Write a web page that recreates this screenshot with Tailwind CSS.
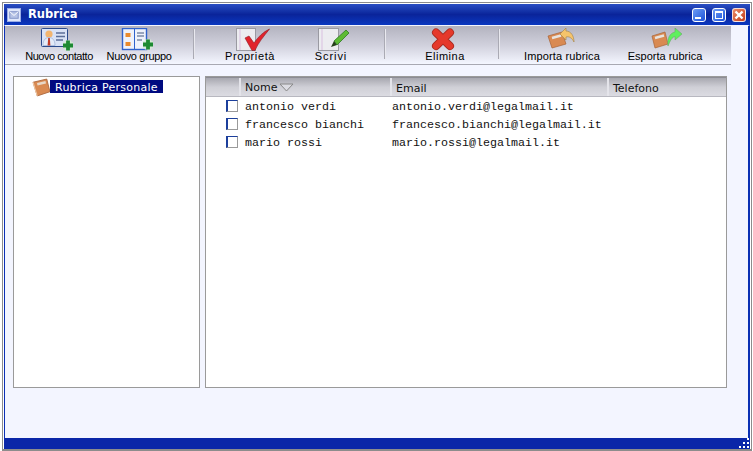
<!DOCTYPE html>
<html><head><meta charset="utf-8"><script src="https://cdn.jsdelivr.net/npm/@tailwindcss/browser@4"></script></head>
<body class="bg-white">
<div class="w-[753px] h-[451px] bg-white pt-[2px] pl-[2px] pr-[1px] overflow-hidden">
<div class="w-[750px] h-[449px] border border-[#8c8c8c] border-b-2 flex flex-col">
<div class="flex-1 flex flex-col border border-white border-b-0 min-h-0">
<!-- title -->
<div class="h-[21px] shrink-0 bg-gradient-to-b from-[#2a4ec4] via-[#0a249a] to-[#0a38c0] flex items-center pl-[3px] pr-[2px]">
  <svg width="14" height="14" viewBox="0 0 15 15" class="shrink-0"><rect x="0.5" y="0.5" width="14" height="14" fill="#dfe6fa" stroke="#9db0e8"/><rect x="3" y="4" width="9" height="7" fill="#b7c3e6" stroke="#7d8fc6"/><path d="M3 4 7.5 8 12 4" fill="none" stroke="#fff"/></svg>
  <span class="ml-[7px] text-white font-bold text-[11.5px] leading-none font-['DejaVu_Sans',sans-serif]">Rubrica</span>
  <div class="ml-auto flex gap-[6px] items-center mr-[2px]">
    <div class="w-[14px] h-[14px] rounded-[3px] border border-white bg-gradient-to-br from-[#6f9cf5] to-[#1c50d8] flex items-end justify-center pb-[2px]"><div class="w-[6px] h-[2px] bg-white -ml-[2px]"></div></div>
    <div class="w-[14px] h-[14px] rounded-[3px] border border-white bg-gradient-to-br from-[#6f9cf5] to-[#1c50d8] flex items-center justify-center"><div class="w-[8px] h-[8px] border border-white border-t-2"></div></div>
    <div class="w-[14px] h-[14px] rounded-[3px] border border-white/80 bg-gradient-to-br from-[#eb8a66] to-[#c23a14] flex items-center justify-center"><svg width="10" height="10" viewBox="0 0 10 10"><path d="M1.5 1.5 8.5 8.5M8.5 1.5 1.5 8.5" stroke="#fff" stroke-width="2.4"/></svg></div>
  </div>
</div>
<!-- body -->
<div class="flex-1 min-h-0 flex flex-col bg-[#f3f5ff] border-l border-r-2 border-[#0a2fb4] border-t-[1.5px] border-t-[#f3f5ff]">
  <div class="w-[726px] h-[39px] shrink-0 flex pl-[14px] border-b border-[#a8a8b2] bg-gradient-to-b from-[#b3b3bf] via-[#d0d0dc] to-[#f4f6ff] font-['Liberation_Sans',sans-serif] text-[11px] text-black">
    <div class="w-[80px] flex flex-col items-center">
      <svg width="40" height="24" viewBox="0 0 40 24" class="shrink-0 mt-[2px]"><rect x="2.5" y="0.5" width="26" height="18" rx="1" fill="#d9e2f5" stroke="#2a4a8c"/><circle cx="10" cy="6" r="3.6" fill="#f2b56f"/><path d="M4 17.5c0-6 3-8 6-8s6 2 6 8z" fill="#e4ebf8" stroke="#8fa4cc" stroke-width=".6"/><path d="M9.2 10h1.6l.6 7.5h-2.8z" fill="#c33a25"/><path d="M17 5h9M17 8.5h9M17 12h7" stroke="#5c6f98" stroke-width="1.6"/><path d="M29 12.5v10M24 17.5h10" stroke="#d5ead5" stroke-width="6.4"/><path d="M29 12.5v10M24 17.5h10" stroke="#1d8a32" stroke-width="3.8"/></svg>
      <span class="-mt-[2px] leading-[13px] tracking-[-.45px] whitespace-nowrap">Nuovo contatto</span>
    </div>
    <div class="w-[80px] flex flex-col items-center">
      <svg width="40" height="24" viewBox="0 0 40 24" class="shrink-0 mt-[2px]"><rect x="3.5" y="0.5" width="24" height="21" fill="#eef2fb" stroke="#2f62cc" stroke-width="1.4"/><path d="M15.5 1v20" stroke="#2f62cc"/><rect x="6.5" y="5" width="5" height="4" fill="#e98a2c"/><rect x="6.5" y="14" width="5" height="4" fill="#e98a2c"/><path d="M18 5h7M18 8h7M18 12h5" stroke="#7c8aa8" stroke-width="1.4"/><path d="M29 11.5v10M24 16.5h10" stroke="#d5ead5" stroke-width="6.4"/><path d="M29 11.5v10M24 16.5h10" stroke="#1d8a32" stroke-width="3.8"/></svg>
      <span class="-mt-[2px] leading-[13px] tracking-[-.35px] whitespace-nowrap">Nuovo gruppo</span>
    </div>
    <div class="w-[2px] h-[30px] mt-[3px] ml-[14px] mr-[15px] bg-[#e9e9ef] border-l border-[#aaaab4]"></div>
    <div class="w-[80px] flex flex-col items-center">
      <svg width="40" height="24" viewBox="0 0 40 24" class="shrink-0 mt-[2px]"><rect x="6.5" y="0.5" width="19" height="22" fill="#ececf0" stroke="#9a9aa2"/><path d="M10 1v21" stroke="#d9c0e0"/><path d="M15 10 19 8 24 15C28 9 33 4 39.5 1 34 8 28 15 25 22.5H22z" fill="#e1232c" stroke="#8e1a22" stroke-width=".6"/></svg>
      <span class="-mt-[2px] leading-[13px] tracking-[.6px] whitespace-nowrap">Proprietà</span>
    </div>
    <div class="w-[80px] flex flex-col items-center ml-[1px]">
      <svg width="40" height="24" viewBox="0 0 40 24" class="shrink-0 mt-[2px]"><rect x="7.5" y="0.5" width="20" height="22" fill="#ececf0" stroke="#9a9aa2"/><path d="M11 1v21" stroke="#d9c0e0"/><path d="M23 13 35 2l3 3-12 12z" fill="#5dbb34" stroke="#2d7a22" stroke-width=".8"/><path d="M20 19l3-6 3 4z" fill="#24401a"/></svg>
      <span class="-mt-[2px] leading-[13px] tracking-[.9px] whitespace-nowrap">Scrivi</span>
    </div>
    <div class="w-[2px] h-[30px] mt-[3px] ml-[13px] mr-[19px] bg-[#e9e9ef] border-l border-[#aaaab4]"></div>
    <div class="w-[80px] flex flex-col items-center">
      <svg width="40" height="24" viewBox="0 0 40 24" class="shrink-0 mt-[2px]"><path d="M11 4.5 25 18M25 4.5 11 18" stroke="#a82a20" stroke-width="8" stroke-linecap="round"/><path d="M11 4.5 25 18M25 4.5 11 18" stroke="#e5392b" stroke-width="6.4" stroke-linecap="round"/></svg>
      <span class="-mt-[2px] leading-[13px] tracking-[.5px] whitespace-nowrap">Elimina</span>
    </div>
    <div class="w-[2px] h-[30px] mt-[3px] ml-[13px] mr-[12px] bg-[#e9e9ef] border-l border-[#aaaab4]"></div>
    <div class="w-[100px] flex flex-col items-center">
      <svg width="40" height="24" viewBox="0 0 40 24" class="shrink-0 mt-[2px]"><path d="M6 8 20 4l4 12-14 4z" fill="#d98a52" stroke="#a8643a" stroke-width=".7"/><path d="M10 10 19 7.5" stroke="#e8e4df" stroke-width="2.4"/><path d="M18 6 24 0V3C29 3 32 8 32 14 30 10 27 8 24 9V12z" fill="#f6c46a" stroke="#a98a50" stroke-width=".7"/></svg>
      <span class="-mt-[2px] leading-[13px] tracking-[.13px] whitespace-nowrap">Importa rubrica</span>
    </div>
    <div class="w-[100px] flex flex-col items-center ml-[3px]">
      <svg width="40" height="24" viewBox="0 0 40 24" class="shrink-0 mt-[2px]"><path d="M7 8 20 4l3 12-13 4z" fill="#d98a52" stroke="#a8643a" stroke-width=".7"/><path d="M10 10 19 7.5" stroke="#e8e4df" stroke-width="2.4"/><path d="M23 18C22 10 25 5 30 4V0L37 6 30 12V8.5C27 9 25 13 23 18z" fill="#5ef05e" stroke="#6aa86a" stroke-width=".6"/></svg>
      <span class="-mt-[2px] leading-[13px] whitespace-nowrap">Esporta rubrica</span>
    </div>
  </div>
  <div class="flex gap-[5px] pl-[8px] pt-[11px]">
    <!-- tree -->
    <div class="w-[187px] h-[312px] shrink-0 border border-[#9a9a9a] bg-white pt-[1px] pl-[18px]">
      <div class="flex items-center h-[19px]">
        <svg width="19" height="19" viewBox="0 0 18 18" class="shrink-0"><path d="M1 4 14 1l3 12-12 4z" fill="#d98a52" stroke="#a8643a" stroke-width=".8" stroke-linejoin="round"/><path d="M5 6 13 4" stroke="#e8d8c8" stroke-width="2.4"/><path d="M1 4l4 13" stroke="#f0c8a4"/></svg>
        <span class="h-[13px] w-[113px] -ml-px -mt-[3px] bg-[#000a80] text-white pl-[5px] font-['DejaVu_Sans',sans-serif] text-[11px] leading-[15px] whitespace-nowrap tracking-[.25px]">Rubrica Personale</span>
      </div>
    </div>
    <!-- list -->
    <div class="w-[522px] h-[312px] shrink-0 border border-[#9a9a9a] bg-white">
      <div class="h-[20px] flex bg-gradient-to-b from-[#a8a8b0] via-[#cfcfd6] to-[#dcdce2] border-b border-[#b8b8c0] border-t border-t-[#8c8c94] font-['DejaVu_Sans',sans-serif] text-[11px] text-[#111] leading-[21px]">
        <div class="w-[33px] shrink-0"></div>
        <div class="w-[151px] shrink-0 border-l-2 border-[#e4e4ea] pl-[4px] flex items-center"><span class="pt-[1px]">Nome</span><svg width="16" height="9" viewBox="0 0 16 9" class="ml-[2px]"><path d="M1 1h13L7.5 8z" fill="#dcdce2" stroke="#888"/></svg></div>
        <div class="w-[217px] shrink-0 border-l-2 border-[#e4e4ea] pl-[4px]">Email</div>
        <div class="flex-1 border-l-2 border-[#e4e4ea] pl-[4px]">Telefono</div>
      </div>
      <div class="font-['Liberation_Mono',monospace] text-[11.67px] leading-[18px] text-[#111]">
        <div class="flex h-[18px] items-center"><div class="w-[20px] shrink-0"></div><div class="w-[12px] h-[12px] border border-l-2 border-[#1c3f9c] border-b-[#9a9a9a] border-r-[#9a9a9a] shrink-0 -mt-[1px]"></div><span class="ml-[7px] w-[147px] shrink-0 pt-[2px]">antonio verdi</span><span class="pt-[2px]">antonio.verdi@legalmail.it</span></div>
        <div class="flex h-[18px] items-center"><div class="w-[20px] shrink-0"></div><div class="w-[12px] h-[12px] border border-l-2 border-[#1c3f9c] border-b-[#9a9a9a] border-r-[#9a9a9a] shrink-0 -mt-[1px]"></div><span class="ml-[7px] w-[147px] shrink-0 pt-[2px]">francesco bianchi</span><span class="pt-[2px]">francesco.bianchi@legalmail.it</span></div>
        <div class="flex h-[18px] items-center"><div class="w-[20px] shrink-0"></div><div class="w-[12px] h-[12px] border border-l-2 border-[#1c3f9c] border-b-[#9a9a9a] border-r-[#9a9a9a] shrink-0 -mt-[1px]"></div><span class="ml-[7px] w-[147px] shrink-0 pt-[2px]">mario rossi</span><span class="pt-[2px]">mario.rossi@legalmail.it</span></div>
      </div>
    </div>
  </div>
</div>
<!-- status -->
<div class="h-[11px] shrink-0 bg-[#0a26a8] flex justify-end items-end pr-[1px] pb-[1px]">
  <svg width="11" height="11" viewBox="0 0 11 11"><path d="M9 1h2v2H9zM5 5h2v2H5zM9 5h2v2H9zM1 9h2v2H1zM5 9h2v2H5zM9 9h2v2H9z" fill="#fff"/></svg>
</div>
</div>
</div>
</div>
</body></html>
